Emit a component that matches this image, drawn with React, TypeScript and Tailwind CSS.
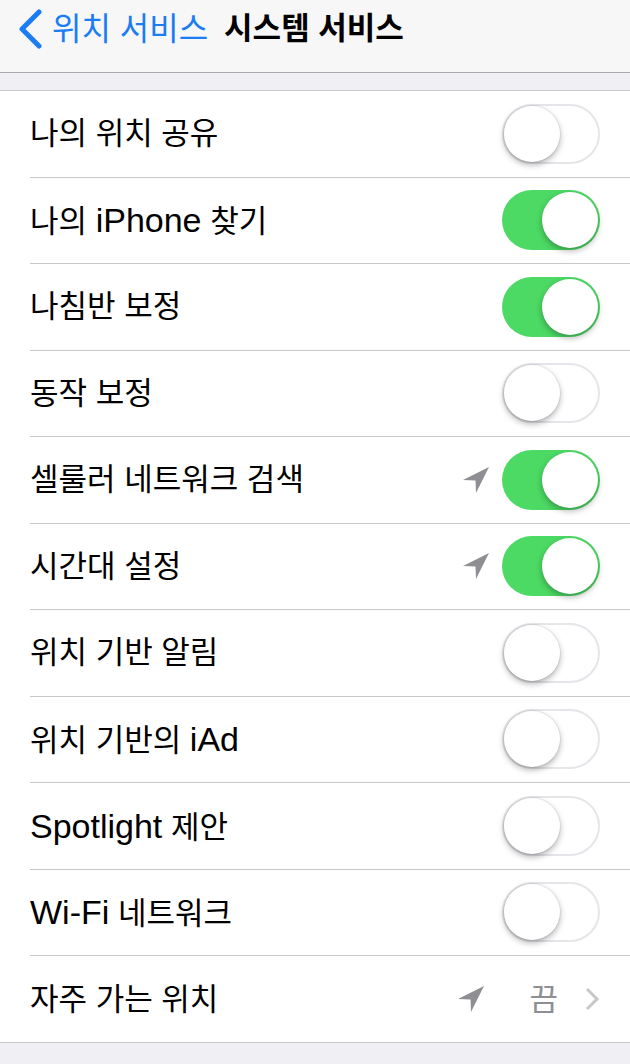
import React from "react";

// iOS 7 style "시스템 서비스" settings screen.

type Row = {
  label: string;
  on?: boolean;
  arrow?: boolean;
  detail?: string;
};

const ROWS: Row[] = [
  { label: "나의 위치 공유", on: false },
  { label: "나의 iPhone 찾기", on: true },
  { label: "나침반 보정", on: true },
  { label: "동작 보정", on: false },
  { label: "셀룰러 네트워크 검색", on: true, arrow: true },
  { label: "시간대 설정", on: true, arrow: true },
  { label: "위치 기반 알림", on: false },
  { label: "위치 기반의 iAd", on: false },
  { label: "Spotlight 제안", on: false },
  { label: "Wi-Fi 네트워크", on: false },
  { label: "자주 가는 위치", arrow: true, detail: "끔" },
];

const FONT = {
  fontFamily: '"Liberation Sans", "Noto Sans CJK KR", sans-serif',
};

// The system font draws Latin letters larger than Hangul; split runs so
// each script gets its own size.
function Label({ text }: { text: string }) {
  const parts = text.split(/([A-Za-z][A-Za-z\-]*)/);
  return (
    <span className="flex-1 text-[31px] text-black leading-none whitespace-pre">
      {parts.map((p, i) =>
        /^[A-Za-z]/.test(p) ? (
          <span key={i} className="text-[34px]">
            {p}
          </span>
        ) : (
          <span key={i}>{p}</span>
        ),
      )}
    </span>
  );
}

function LocationArrow() {
  return (
    <svg width="28" height="28" viewBox="0 0 28 28" className="shrink-0">
      <path d="M27 1 L1 14 L13.5 14.5 L14 27 Z" fill="#8e8e93" />
    </svg>
  );
}

function Toggle({ on }: { on: boolean }) {
  return (
    <div
      className={
        on
          ? "relative w-[98px] h-[60px] rounded-full bg-[#4cd964] shrink-0"
          : "relative w-[98px] h-[60px] rounded-full bg-white border-2 border-[#e5e5ea] shrink-0"
      }
    >
      <div
        className={
          on
            ? "absolute top-[2px] right-[2px] w-[56px] h-[56px] rounded-full bg-white shadow-[0_3px_6px_rgba(0,0,0,0.3)]"
            : "absolute top-0 left-0 w-[56px] h-[56px] rounded-full bg-white shadow-[0_3px_6px_rgba(0,0,0,0.3),0_0_0_1px_rgba(0,0,0,0.06)]"
        }
      />
    </div>
  );
}

export default function App() {
  return (
    <div className="w-[630px] h-[1064px] bg-[#efeff4] overflow-hidden" style={FONT}>
      {/* nav bar */}
      <div className="h-[73px] bg-[#f7f7f8] border-b border-[#a9a9ae] flex items-center pl-[17px] pb-[15px]">
        <svg width="26" height="40" viewBox="0 0 26 40" className="shrink-0">
          <path d="M22 3 L5 20 L22 37" fill="none" stroke="#1b7cf4" strokeWidth="5" strokeLinecap="round" strokeLinejoin="round" />
        </svg>
        <span className="ml-[9px] text-[32px] text-[#1b7cf4] leading-none">위치 서비스</span>
        <span className="ml-[16px] text-[31px] font-bold text-black leading-none">시스템 서비스</span>
      </div>

      <div className="h-[17px]" />

      <div className="bg-white border-t border-b border-[#c8c7cc]">
        {ROWS.map((row, i) => (
          <div key={row.label} className="pl-[30px]">
            <div
              className={
                i === ROWS.length - 1
                  ? "h-[86px] flex items-center pr-[30px]"
                  : "h-[86.5px] flex items-center pr-[30px] border-b border-[#c8c7cc]"
              }
            >
              <Label text={row.label} />
              {row.arrow && (
                <div className={row.detail ? "mr-[44px]" : "mr-[12px]"}>
                  <LocationArrow />
                </div>
              )}
              {row.detail ? (
                <div className="flex items-center">
                  <span className="text-[31px] text-[#8e8e93] leading-none">{row.detail}</span>
                  <svg width="16" height="26" viewBox="0 0 16 26" className="ml-[26px]">
                    <path d="M3 3 L13 13 L3 23" fill="none" stroke="#c7c7cc" strokeWidth="3" />
                  </svg>
                </div>
              ) : (
                <Toggle on={!!row.on} />
              )}
            </div>
          </div>
        ))}
      </div>
    </div>
  );
}
